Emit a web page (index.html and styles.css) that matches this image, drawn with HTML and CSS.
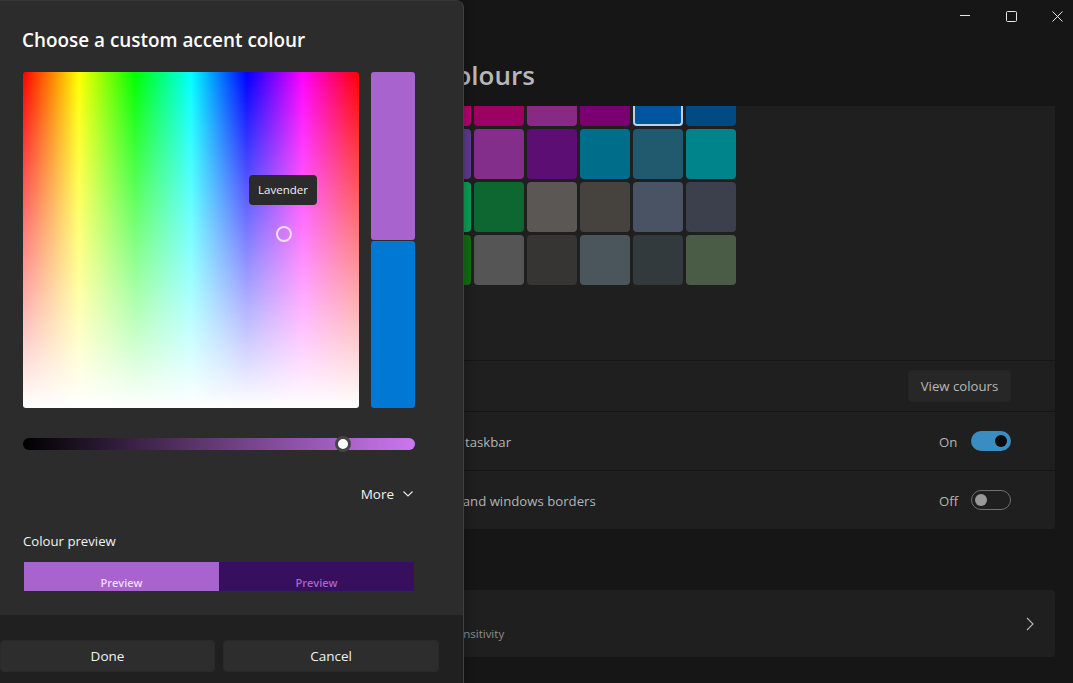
FILE: index.html
```html
<!DOCTYPE html>
<html lang="en">
<head>
<meta charset="utf-8">
<title>Colours</title>
<link rel="stylesheet" href="styles.css">
</head>
<body>
<div class="app">
  <div class="titlebar">
    <svg class="win win-min" width="10" height="10" viewBox="0 0 10 10"><path d="M0 5.5h10" stroke="#e6e6e6" fill="none"/></svg>
    <svg class="win win-max" width="11" height="11" viewBox="0 0 11 11"><rect x=".5" y=".5" width="10" height="10" rx="1" stroke="#e6e6e6" fill="none"/></svg>
    <svg class="win win-close" width="11" height="11" viewBox="0 0 11 11"><path d="M.5.5l10 10M10.5.5l-10 10" stroke="#e6e6e6" fill="none"/></svg>
  </div>
  <div class="heading"><h1 class="page-title">Colours</h1></div>
  <main class="content">
    <section class="card">
      <div class="swatch-panel">
        <div class="swatches">
          <i class="sw cut c1"></i><i class="sw cut c2"></i><i class="sw cut c3"></i><i class="sw cut c4"></i><i class="sw cut c5 selected"></i><i class="sw cut c6"></i>
          <i class="sw c7"></i><i class="sw c8"></i><i class="sw c9"></i><i class="sw c10"></i><i class="sw c11"></i><i class="sw c12"></i>
          <i class="sw c13"></i><i class="sw c14"></i><i class="sw c15"></i><i class="sw c16"></i><i class="sw c17"></i><i class="sw c18"></i>
          <i class="sw c19"></i><i class="sw c20"></i><i class="sw c21"></i><i class="sw c22"></i><i class="sw c23"></i><i class="sw c24"></i>
        </div>
      </div>
      <div class="row row-custom">
        <span class="row-label">Custom colours</span>
        <button class="view-btn">View colours</button>
      </div>
      <div class="row row-start">
        <span class="row-label">Show accent colour on Start and taskbar</span>
        <span class="toggle-wrap"><span class="toggle-text">On</span><span class="toggle on"></span></span>
      </div>
      <div class="row row-title">
        <span class="row-label">Show accent colour on title bars and windows borders</span>
        <span class="toggle-wrap"><span class="toggle-text">Off</span><span class="toggle off"></span></span>
      </div>
    </section>
    <section class="card card-link">
      <div class="link-text">
        <span class="link-title">Contrast themes</span>
        <span class="link-sub">Colour themes for low vision, light sensitivity</span>
      </div>
      <svg class="link-chevron" width="8" height="14" viewBox="0 0 8 14"><path d="M1 1l6 6-6 6" stroke="#b5b5b5" stroke-width="1.1" fill="none"/></svg>
    </section>
  </main>
</div>

<div class="dialog">
  <div class="dialog-body">
    <h2 class="dialog-title">Choose a custom accent colour</h2>
    <div class="picker">
      <div class="spectrum">
        <div class="tooltip">Lavender</div>
        <div class="ring"></div>
      </div>
      <div class="compare">
        <div class="compare-new"></div>
        <div class="compare-old"></div>
      </div>
    </div>
    <div class="value-slider"><span class="thumb"></span></div>
    <div class="more">
      <span>More</span>
      <svg width="10" height="6" viewBox="0 0 10 6"><path d="M.5.5L5 5 9.5.5" stroke="#e8e8e8" stroke-width="1.1" fill="none"/></svg>
    </div>
    <div class="preview-label">Colour preview</div>
    <div class="preview">
      <div class="preview-a">Preview</div>
      <div class="preview-b">Preview</div>
    </div>
  </div>
  <div class="dialog-footer">
    <button class="dlg-btn btn-done">Done</button>
    <button class="dlg-btn btn-cancel">Cancel</button>
  </div>
</div>
</body>
</html>
```

FILE: styles.css
```css
* { box-sizing: border-box; }
html, body { margin: 0; padding: 0; height: 100%; overflow: hidden; }
body { background: #161616; font-family: "Open Sans", "Noto Sans", sans-serif; color: #b4b4b4; }
button { font-family: inherit; }

.app { display: flex; flex-direction: column; height: 683px; background: #161616; }
.titlebar { display: flex; justify-content: flex-end; align-items: flex-start; height: 32px; padding: 11px 10px 0 0; flex: none; }
.win { display: block; }
.win-min { margin-top: -1px; }
.win-max { margin-left: 36px; }
.win-close { margin-left: 35px; }

.heading { height: 74px; flex: none; padding-left: 439px; }
.page-title { margin: 0; font-size: 26px; line-height: 36px; padding-top: 25px; font-weight: 600; color: #b8b8b8; }

.content { margin: 0 18px 0 240px; display: flex; flex-direction: column; }
.card { background: #1f1f1f; border-radius: 0 0 4px 4px; }
.swatch-panel { height: 255px; border-bottom: 1px solid #151515; padding-left: 181px; }
.swatches { display: grid; grid-template-columns: repeat(6, 50px); grid-template-rows: 20px repeat(3, 50px); gap: 3px; }
.sw { display: block; border-radius: 4px; }
.sw.cut { border-radius: 0 0 4px 4px; }
.sw.selected { border: 2px solid #bcd0e6; border-top: 0; }
.c1 { background: #b4006f; } .c2 { background: #9b0062; } .c3 { background: #882a84; }
.c4 { background: #7a0072; } .c5 { background: #00559f; } .c6 { background: #004a83; }
.c7 { background: #5d3a8e; } .c8 { background: #842e8c; } .c9 { background: #5c0e72; }
.c10 { background: #006d8b; } .c11 { background: #215a6e; } .c12 { background: #00848c; }
.c13 { background: #0d9e55; } .c14 { background: #0e6630; } .c15 { background: #5a5755; }
.c16 { background: #46433f; } .c17 { background: #4a5364; } .c18 { background: #3b404c; }
.c19 { background: #0e6e0e; } .c20 { background: #555555; } .c21 { background: #363534; }
.c22 { background: #4a555c; } .c23 { background: #323a3d; } .c24 { background: #4b5c46; }

.row { display: flex; align-items: center; justify-content: space-between; padding: 0 44px 0 23px; font-size: 13.2px; border-bottom: 1px solid #151515; }
.row-custom { height: 51px; }
.row-start { height: 59px; }
.row-title { height: 58px; border-bottom: 0; }
.row-label { color: #b4b4b4; white-space: nowrap; padding-top: 2px; }
.view-btn { width: 103px; height: 32px; background: #272727; border: 1px solid #252525; border-radius: 4px; color: #b8b8b8; font-size: 13.2px; padding: 0; }
.toggle-wrap { display: flex; align-items: center; gap: 13px; }
.toggle-text { font-size: 13.2px; color: #b4b4b4; width: 19px; padding-top: 2px; }
.toggle { position: relative; display: block; width: 40px; height: 20px; border-radius: 10px; }
.toggle.on { background: #3a8dc0; }
.toggle.on::after { content: ""; position: absolute; right: 4px; top: 4px; width: 12px; height: 12px; border-radius: 50%; background: #0b0b0b; }
.toggle.off { border: 1px solid #6f6f6f; }
.toggle.off::after { content: ""; position: absolute; left: 3px; top: 3px; width: 12px; height: 12px; border-radius: 50%; background: #999; }

.card-link { margin-top: 61px; height: 67px; border-radius: 4px; display: flex; align-items: center; justify-content: space-between; padding: 0 21px 0 26px; }
.link-text { display: flex; flex-direction: column; gap: 0; }
.link-title { font-size: 13.2px; line-height: 20px; color: #b4b4b4; }
.link-sub { font-size: 11.5px; line-height: 16px; color: #8e8e8e; white-space: nowrap; }

.dialog { position: absolute; left: 0; top: 0; width: 464px; height: 683px; display: flex; flex-direction: column; background: #2c2c2c; border-right: 1px solid #414141; border-top: 1px solid #363636; border-top-right-radius: 8px; overflow: hidden; box-shadow: 0 0 12px rgba(0, 0, 0, .3); }
.dialog-body { height: 614px; flex: none; padding: 0 0 0 23px; }
.dialog-title { margin: 0; padding-top: 24px; height: 71px; font-size: 18.9px; line-height: 30px; font-weight: 600; color: #fff; margin-left: -1px; }
.picker { display: flex; gap: 12px; height: 336px; }
.spectrum { position: relative; width: 336px; height: 336px; border-radius: 3px;
  background: linear-gradient(to bottom, rgba(255,255,255,0), #fff),
    linear-gradient(to right, #f00 0%, #ff0 16.6%, #0f0 33.3%, #0ff 50%, #00f 66.6%, #f0f 83.3%, #f00 100%); }
.tooltip { position: absolute; left: 226px; top: 103px; width: 68px; height: 30px; padding-bottom: 2px; display: flex; align-items: center; justify-content: center; background: #2b2b2b; border-radius: 4px; color: #f4f4f4; font-size: 11.5px; }
.ring { position: absolute; left: 253px; top: 154px; width: 16px; height: 16px; border: 2px solid #f3e0ff; border-radius: 50%; }
.compare { width: 44px; height: 336px; display: flex; flex-direction: column; gap: 1px; }
.compare-new { height: 168px; background: #a863cf; border-radius: 3px; }
.compare-old { flex: 1; background: #0078d4; border-radius: 3px; }
.value-slider { position: relative; width: 392px; height: 12px; margin-top: 30px; border-radius: 6px; background: linear-gradient(to right, #000, #cc77f0); }
.thumb { position: absolute; left: 312px; top: -2px; width: 16px; height: 16px; border-radius: 50%; background: #fff; border: 3px solid #454545; }
.more { display: flex; align-items: center; justify-content: flex-end; gap: 9px; width: 392px; height: 22px; margin-top: 33px; padding-right: 2px; font-size: 13.5px; color: #f2f2f2; }
.preview-label { margin-top: 26px; height: 20px; font-size: 13.2px; line-height: 20px; color: #f2f2f2; }
.preview { display: flex; margin: 11px 0 0 1px; width: 390px; height: 29px; }
.preview-a, .preview-b { width: 195px; padding-top: 12px; font-size: 11px; line-height: 17px; text-align: center; font-weight: 600; }
.preview-a { background: #a863cf; color: #f3dcff; }
.preview-b { background: #360f5f; color: #a863cf; }

.dialog-footer { flex: 1; background: #202020; display: flex; gap: 8px; padding-top: 25px; }
.dlg-btn { height: 32px; background: #2d2d2d; border: 1px solid #2a2a2a; border-radius: 4px; color: #f2f2f2; font-size: 13.5px; padding: 0 0 1px; }
.btn-done { width: 215px; }
.btn-cancel { width: 216px; }
```
